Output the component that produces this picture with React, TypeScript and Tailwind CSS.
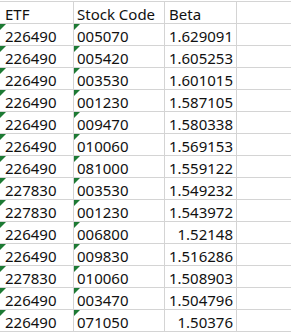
const rows: [string, string, string][] = [
  ["226490", "005070", "1.629091"],
  ["226490", "005420", "1.605253"],
  ["226490", "003530", "1.601015"],
  ["226490", "001230", "1.587105"],
  ["226490", "009470", "1.580338"],
  ["226490", "010060", "1.569153"],
  ["226490", "081000", "1.559122"],
  ["227830", "003530", "1.549232"],
  ["227830", "001230", "1.543972"],
  ["226490", "006800", "1.52148"],
  ["226490", "009830", "1.516286"],
  ["227830", "010060", "1.508903"],
  ["226490", "003470", "1.504796"],
  ["226490", "071050", "1.50376"],
];

const cell =
  "relative h-[22px] border-r border-b border-[#d4d4d4] flex items-end pb-[1px] leading-none";

function Flag() {
  // green "number stored as text" marker
  return (
    <span className="absolute left-0 top-0 w-0 h-0 border-t-[6px] border-r-[6px] border-t-[#1d7a34] border-r-transparent" />
  );
}

function App() {
  return (
    <div
      className="w-[291px] h-[332px] overflow-hidden bg-white pt-px text-[15px] text-[#111]"
      style={{ fontFamily: '"Noto Sans", "Noto Sans CJK KR", sans-serif' }}
    >
      <div className="grid grid-cols-[74px_91px_72px_1fr] border-t border-[#d4d4d4]">
        <div className={cell + " pl-[5px]"}>ETF</div>
        <div className={cell + " pl-[3px]"}>Stock Code</div>
        <div className={cell + " pl-[4px]"}>Beta</div>
        <div className={cell + " border-r-0"} />
        {rows.map(([etf, code, beta], i) => (
          <div key={i} className="contents">
            <div className={cell + " pl-[5px]"}>
              <Flag />
              {etf}
            </div>
            <div className={cell + " pl-[3px]"}>
              <Flag />
              {code}
            </div>
            <div className={cell + " justify-end pr-[3px]"}>{beta}</div>
            <div className={cell + " border-r-0"} />
          </div>
        ))}
      </div>
    </div>
  );
}

export default App;
